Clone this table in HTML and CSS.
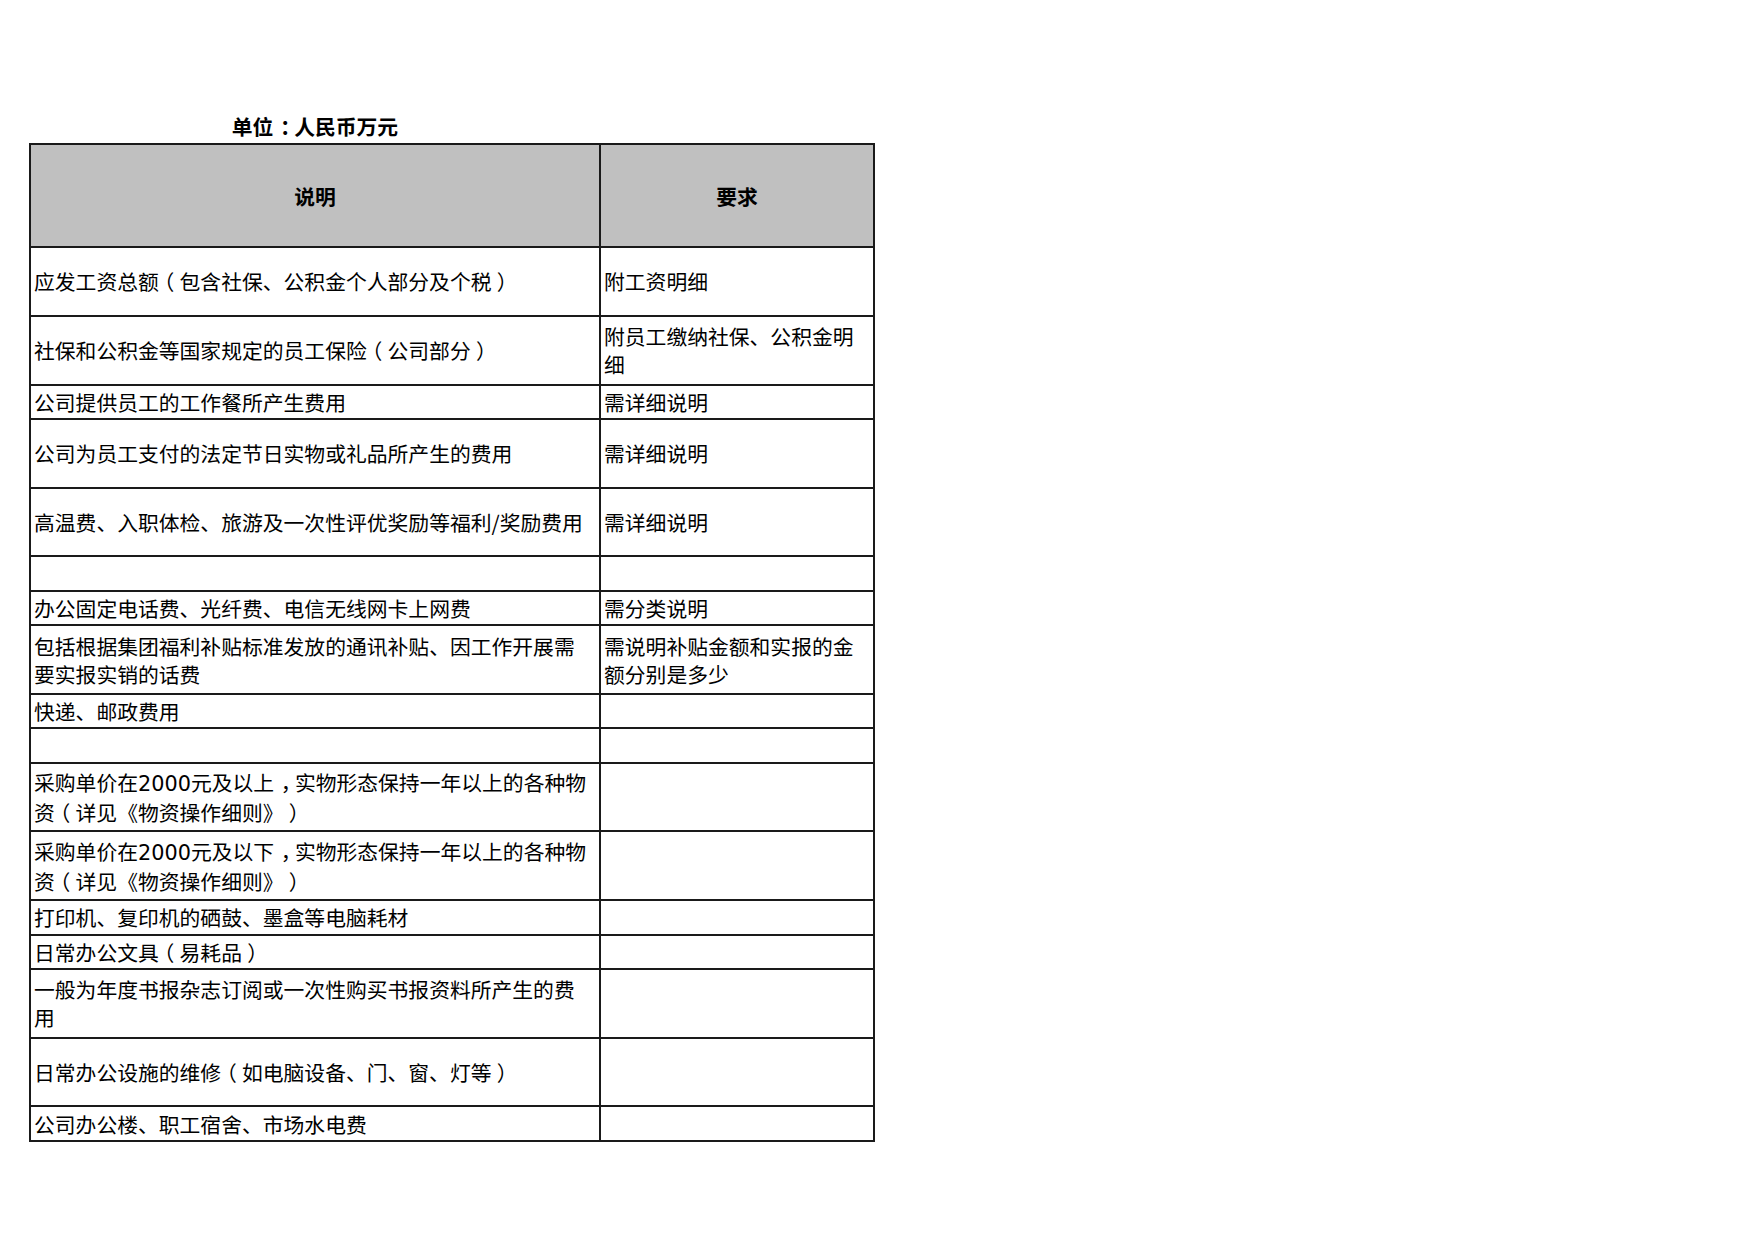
FILE: index.html
```html
<!DOCTYPE html>
<html lang="zh-CN">
<head>
<meta charset="utf-8">
<title>单位：人民币万元</title>
<link rel="stylesheet" href="styles.css">
</head>
<body>
<div class="page">
  <div class="unit">单位<span class="pc">：</span>人民币万元</div>
  <table class="sheet">
    <colgroup>
      <col class="c-desc">
      <col class="c-req">
    </colgroup>
    <tr class="head"><th>说明</th><th>要求</th></tr>
    <tr class="r2"><td>应发工资总额<span class="pp">（</span>包含社保、公积金个人部分及个税<span class="pp">）</span></td><td>附工资明细</td></tr>
    <tr class="r2"><td>社保和公积金等国家规定的员工保险<span class="pp">（</span>公司部分<span class="pp">）</span></td><td>附员工缴纳社保、公积金明细</td></tr>
    <tr class="r1"><td>公司提供员工的工作餐所产生费用</td><td>需详细说明</td></tr>
    <tr class="r2"><td>公司为员工支付的法定节日实物或礼品所产生的费用</td><td>需详细说明</td></tr>
    <tr class="r2"><td>高温费、入职体检、旅游及一次性评优奖励等福利/奖励费用</td><td>需详细说明</td></tr>
    <tr class="r1"><td></td><td></td></tr>
    <tr class="r1"><td>办公固定电话费、光纤费、电信无线网卡上网费</td><td>需分类说明</td></tr>
    <tr class="r2"><td>包括根据集团福利补贴标准发放的通讯补贴、因工作开展需要实报实销的话费</td><td>需说明补贴金额和实报的金额分别是多少</td></tr>
    <tr class="r1"><td>快递、邮政费用</td><td></td></tr>
    <tr class="r1"><td></td><td></td></tr>
    <tr class="r2"><td><span class="ln">采购单价在<span class="num">2000</span>元及以上<span class="pc">，</span>实物形态保持一年以上的各种物</span><span class="ln">资<span class="pp">（</span>详见《物资操作细则》<span class="pp">）</span></span></td><td></td></tr>
    <tr class="r2"><td><span class="ln">采购单价在<span class="num">2000</span>元及以下<span class="pc">，</span>实物形态保持一年以上的各种物</span><span class="ln">资<span class="pp">（</span>详见《物资操作细则》<span class="pp">）</span></span></td><td></td></tr>
    <tr class="r1"><td>打印机、复印机的硒鼓、墨盒等电脑耗材</td><td></td></tr>
    <tr class="r1"><td>日常办公文具<span class="pp">（</span>易耗品<span class="pp">）</span></td><td></td></tr>
    <tr class="r2"><td>一般为年度书报杂志订阅或一次性购买书报资料所产生的费用</td><td></td></tr>
    <tr class="r2"><td>日常办公设施的维修<span class="pp">（</span>如电脑设备、门、窗、灯等<span class="pp">）</span></td><td></td></tr>
    <tr class="r1"><td>公司办公楼、职工宿舍、市场水电费</td><td></td></tr>
  </table>
</div>
</body>
</html>
```

FILE: styles.css
```css
html, body {
  margin: 0;
  padding: 0;
  background: #ffffff;
}

body {
  font-family: "Noto Sans CJK SC", "Noto Sans", sans-serif;
  font-size: 20.8px;
  color: #000000;
  text-spacing-trim: space-all;
}

.page {
  padding: 109px 0 0 29px;
}

.unit {
  width: 572px;
  height: 34px;
  line-height: 34px;
  text-align: center;
  font-weight: bold;
}

/* full-width punctuation centred in its em box, as the sheet's font draws it */
.pp,
.pc,
.num {
  display: inline-block;
}

.pp,
.pc {
  font-feature-settings: "halt" 1;
  padding: 0 0.25em;
}

.pc {
  padding: 0 0.18em 0 0.32em;
}

.num {
  font-family: "DejaVu Sans", "Noto Sans CJK SC", sans-serif;
}

.ln {
  display: block;
  white-space: nowrap;
}

.sheet {
  border-collapse: separate;
  border-spacing: 0;
  border-top: 2px solid #1a1a1a;
  border-left: 2px solid #1a1a1a;
  table-layout: fixed;
  width: 846px;
}

.c-desc { width: 570px; }
.c-req { width: 274px; }

.sheet th,
.sheet td {
  border-right: 2px solid #1a1a1a;
  border-bottom: 2px solid #1a1a1a;
  padding: 0 12px 0 3px;
  line-height: 28px;
  vertical-align: middle;
  text-align: left;
  font-weight: normal;
  overflow: hidden;
}

.sheet th {
  background: #c0c0c0;
  font-weight: bold;
  text-align: center;
  padding: 0;
}

.head { height: 103px; }
.r1 { height: 34.38px; }
.r2 { height: 68.76px; }
```
